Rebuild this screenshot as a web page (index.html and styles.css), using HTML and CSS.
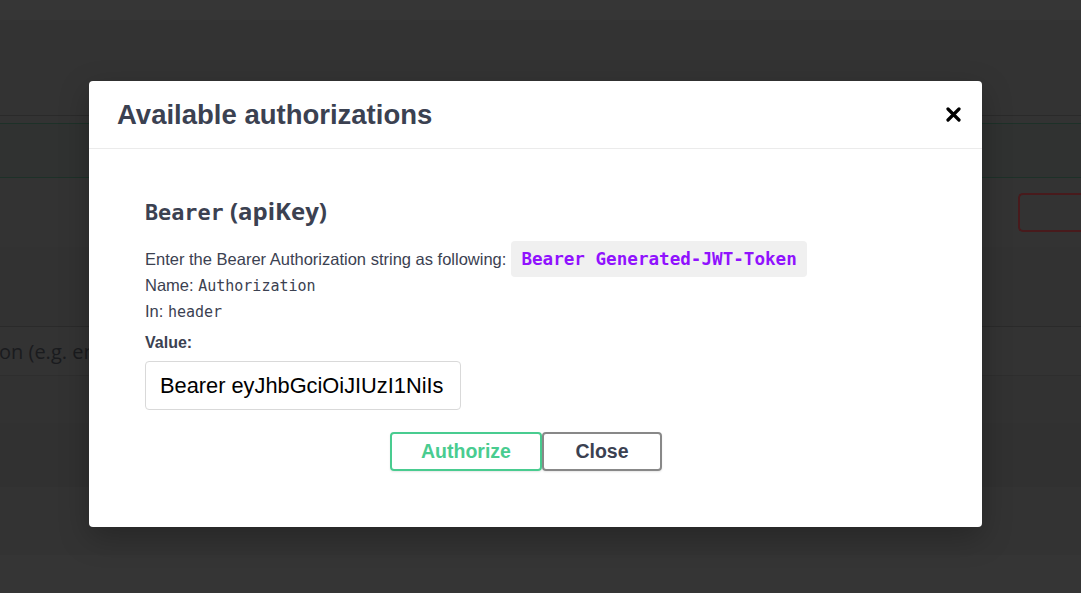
FILE: index.html
```html
<!DOCTYPE html>
<html lang="en">
<head>
<meta charset="utf-8">
<title>Available authorizations</title>
<link rel="stylesheet" href="styles.css">
</head>
<body>
<div class="page">
  <div class="band band-top"></div>
  <div class="band band-head"></div>
  <div class="band band-gap"></div>
  <div class="band band-summary"></div>
  <div class="band band-tools">
    <span class="try-btn"></span>
  </div>
  <div class="band band-params"></div>
  <div class="band band-field"><span class="placeholder">on (e.g. en-US)</span></div>
  <div class="band band-a"></div>
  <div class="band band-b"></div>
  <div class="band band-c"></div>
  <div class="band band-d"></div>
</div>

<div class="modal">
  <div class="modal-header">
    <h3 class="modal-title">Available authorizations</h3>
    <button class="close-x" type="button" aria-label="Close">
      <svg width="15" height="15" viewBox="0 0 15 15"><path d="M2 2 L13 13 M13 2 L2 13" stroke="#000" stroke-width="3.2" stroke-linecap="round" fill="none"/></svg>
    </button>
  </div>
  <div class="modal-body">
    <h4 class="scheme"><code class="scheme-name">Bearer</code> <span class="scheme-type">(apiKey)</span></h4>
    <div class="desc">Enter the Bearer Authorization string as following: <code class="pill">Bearer Generated-JWT-Token</code></div>
    <div class="meta">Name: <code class="mono">Authorization</code></div>
    <div class="meta">In: <code class="mono">header</code></div>
    <label class="value-label">Value:</label>
    <div class="input">Bearer eyJhbGciOiJIUzI1NiIs</div>
    <div class="btn-row">
      <button class="btn btn-auth" type="button">Authorize</button>
      <button class="btn btn-close" type="button">Close</button>
    </div>
  </div>
</div>
</body>
</html>
```

FILE: styles.css
```css
html, body {
  margin: 0;
  padding: 0;
}
body {
  background: #333333;
  width: 1081px;
  height: 593px;
  overflow: hidden;
  font-family: "Liberation Sans", Arial, sans-serif;
}
.page {
  display: flex;
  flex-direction: column;
}
.band { width: 100%; }
.band-top { height: 20px; background: #363636; }
.band-head { height: 95px; background: #333333; border-bottom: 1px solid #2a2a2a; }
.band-gap { height: 7px; background: #333333; border-bottom: 1px solid #1d3128; }
.band-summary { height: 53px; background: #303231; border-bottom: 1px solid #1d3128; }
.band-tools {
  height: 69px;
  background: #333333;
  display: flex;
  justify-content: flex-end;
  padding-top: 15px;
  box-sizing: border-box;
}
.try-btn {
  display: block;
  width: 63px;
  height: 39px;
  border: 2px solid #481a1c;
  border-right: none;
  border-radius: 5px 0 0 5px;
  box-sizing: border-box;
}
.band-params { height: 79px; background: #323232; border-bottom: 1px solid #2a2a2a; }
.band-field {
  height: 48px;
  background: #333333;
  display: flex;
  align-items: center;
  overflow: hidden;
  border-bottom: 1px solid #2e2e2e;
}
.placeholder {
  font-family: "Open Sans", sans-serif;
  font-size: 20px;
  color: #1a1b1e;
  margin-left: -1px;
  white-space: nowrap;
}
.band-a { height: 47px; background: #323232; }
.band-b { height: 64px; background: #313131; }
.band-c { height: 68px; background: #333333; }
.band-d { height: 40px; background: #353535; }

.modal {
  position: absolute;
  left: 89px;
  top: 81px;
  width: 893px;
  height: 446px;
  background: #ffffff;
  border-radius: 4px;
  box-shadow: 0 10px 30px rgba(0, 0, 0, 0.25);
  color: #3b4151;
}
.modal-header {
  height: 67px;
  border-bottom: 1px solid #ebebeb;
  display: flex;
  align-items: center;
  justify-content: space-between;
  padding: 0 20px 0 28px;
}
.modal-title {
  margin: 0;
  font-size: 27.5px;
  font-weight: 700;
  color: #3b4151;
  padding-top: 0;
}
.close-x {
  background: none;
  border: none;
  padding: 0;
  width: 15px;
  height: 15px;
  display: flex;
  margin-right: 1px;
}
.modal-body {
  padding: 47px 75px 0 56px;
}
.scheme {
  margin: 0;
  font-size: 22px;
  font-weight: 700;
  color: #3b4151;
  line-height: 30px;
}
.scheme-name {
  font-family: "DejaVu Sans Mono", monospace;
  font-size: 21.8px;
}
.scheme-type {
  font-family: "Open Sans", sans-serif;
  font-size: 24px;
}
.desc, .meta {
  font-size: 16.5px;
  color: #3b4151;
  line-height: 26px;
  height: 26px;
}
.desc {
  display: flex;
  align-items: center;
  gap: 5px;
  margin-top: 18px;
}
.pill {
  font-family: "DejaVu Sans Mono", monospace;
  font-weight: 700;
  font-size: 17.6px;
  color: #9012fe;
  background: #f0f0f0;
  border-radius: 4px;
  padding: 0 10px;
  line-height: 36px;
  height: 36px;
  flex: none;
}
.mono {
  font-family: "DejaVu Sans Mono", monospace;
  font-size: 15px;
}
.value-label {
  display: block;
  font-size: 16px;
  font-weight: 700;
  margin-top: 8px;
  line-height: 22px;
}
.input {
  margin-top: 7px;
  width: 316px;
  height: 49px;
  box-sizing: border-box;
  border: 1px solid #d9d9d9;
  border-radius: 4px;
  padding: 0 14px;
  display: flex;
  align-items: center;
  font-size: 21.8px;
  color: #000;
  white-space: nowrap;
  overflow: hidden;
}
.btn-row {
  display: flex;
  justify-content: center;
  margin-top: 22px;
}
.btn {
  font-family: "Liberation Sans", Arial, sans-serif;
  font-weight: 700;
  font-size: 19.5px;
  height: 39px;
  border-radius: 4px;
  background: transparent;
  box-shadow: 0 1px 2px rgba(0, 0, 0, 0.1);
  padding: 0;
}
.btn-auth {
  width: 152px;
  border: 2px solid #49cc90;
  color: #49cc90;
}
.btn-close {
  width: 120px;
  border: 2px solid #888888;
  color: #3b4151;
}
```
